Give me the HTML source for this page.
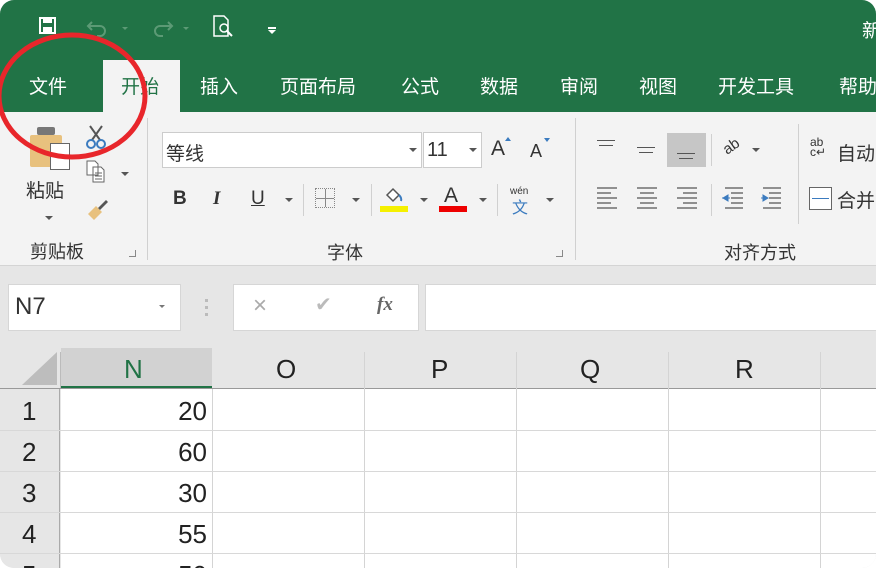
<!DOCTYPE html>
<html><head><meta charset="utf-8">
<style>
*{margin:0;padding:0;box-sizing:border-box}
body{width:876px;height:572px;background:#fff;position:relative;overflow:hidden;font-family:"Liberation Sans","Noto Sans CJK SC",sans-serif;white-space:nowrap}
.a{position:absolute}
#win{position:absolute;left:0;top:0;width:876px;height:568px;border-radius:14px;overflow:hidden;background:#e6e6e6}
.tab{position:absolute;top:72px;color:#fff;font-size:19px}
.t{position:absolute;color:#333;font-size:19px}
.caret{position:absolute;width:0;height:0;border-left:4px solid transparent;border-right:4px solid transparent;border-top:4px solid #555}
.vs{position:absolute;width:1px;background:#d0d0d0}
.ln{position:absolute;height:1px;background:#555}
.cell{position:absolute;background:#fff}
.num{position:absolute;left:100px;width:107px;text-align:right;font-size:26px;color:#222}
</style></head><body>
<div id="win">
<div class="a" style="left:0;top:0;width:876px;height:112px;background:#217346"></div>
<svg class="a" style="left:38px;top:16px" width="20" height="20" viewBox="0 0 20 20"><rect x="2" y="2" width="15" height="15" fill="none" stroke="#fff" stroke-width="2"/><rect x="5" y="2" width="9" height="5" fill="#fff"/><rect x="5" y="11" width="9" height="6" fill="#fff"/></svg>
<svg class="a" style="left:86px;top:14px" width="110" height="24" viewBox="0 0 110 24"><path d="M6 8 L2 12 L6 16 M2 12 H14 a5 5 0 0 1 0 10 H11" fill="none" stroke="#5c9a75" stroke-width="2"/><path d="M36 13 l3 3 l3-3z" fill="#5c9a75"/><path d="M82 8 L86 12 L82 16 M86 12 H74 a5 5 0 0 0 0 10 H77" fill="none" stroke="#5c9a75" stroke-width="2"/><path d="M97 13 l3 3 l3-3z" fill="#5c9a75"/></svg>
<svg class="a" style="left:212px;top:14px" width="26" height="26" viewBox="0 0 26 26"><path d="M2 2 H12 L16 6 V22 H2 Z" fill="none" stroke="#fff" stroke-width="1.5"/><circle cx="12" cy="14" r="4" fill="none" stroke="#fff" stroke-width="1.5"/><path d="M15 17 L20 22" stroke="#fff" stroke-width="2"/></svg>
<div class="a" style="left:268px;top:27px;width:8px;height:2px;background:#fff"></div>
<div class="a" style="left:268px;top:30px;border-left:4px solid transparent;border-right:4px solid transparent;border-top:4px solid #fff"></div>
<div class="a" style="left:862px;top:16px;color:#fff;font-size:19px">新</div>
<div class="a" style="left:103px;top:60px;width:77px;height:53px;background:#f3f3f3"></div>
<div class="tab" style="left:29px">文件</div>
<div class="tab" style="left:121px;color:#217346">开始</div>
<div class="tab" style="left:200px">插入</div>
<div class="tab" style="left:280px">页面布局</div>
<div class="tab" style="left:401px">公式</div>
<div class="tab" style="left:480px">数据</div>
<div class="tab" style="left:560px">审阅</div>
<div class="tab" style="left:639px">视图</div>
<div class="tab" style="left:718px">开发工具</div>
<div class="tab" style="left:839px">帮助</div>
<div class="a" style="left:0;top:112px;width:876px;height:154px;background:#f3f3f3;border-bottom:1px solid #d4d4d4"></div>
<div class="a" style="left:30px;top:135px;width:32px;height:32px;background:#e8c17e;border-radius:2px"></div>
<div class="a" style="left:37px;top:127px;width:18px;height:8px;background:#777;border-radius:2px"></div>
<div class="a" style="left:50px;top:143px;width:20px;height:27px;background:#fff;border:1px solid #666"></div>
<svg class="a" style="left:84px;top:124px" width="24" height="26" viewBox="0 0 24 26"><path d="M6 2 L16 16 M18 2 L8 16" stroke="#555" stroke-width="2"/><circle cx="7" cy="20" r="4" fill="none" stroke="#3b7bbf" stroke-width="2"/><circle cx="17" cy="20" r="4" fill="none" stroke="#3b7bbf" stroke-width="2"/></svg>
<svg class="a" style="left:86px;top:160px" width="22" height="24" viewBox="0 0 22 24"><path d="M1 1 H9 L12 4 V15 H1 Z M7 7 H15 L18 10 V22 H7 Z" fill="#fff" stroke="#666"/><path d="M9 13 H16 M9 16 H16 M9 19 H16" stroke="#666"/></svg>
<div class="caret" style="left:121px;top:172px"></div>
<svg class="a" style="left:86px;top:198px" width="24" height="22" viewBox="0 0 24 22"><path d="M2 16 L10 8 L16 14 L8 22 Z" fill="#e8c17e"/><path d="M12 10 L20 2 L22 4 L14 12 Z" fill="#555"/></svg>
<div class="t" style="left:26px;top:176px">粘贴</div>
<div class="caret" style="left:45px;top:216px"></div>
<div class="t" style="left:30px;top:238px;font-size:18px">剪贴板</div>
<div class="a" style="left:129px;top:250px;width:7px;height:7px;border-right:1px solid #888;border-bottom:1px solid #888"></div>
<div class="vs" style="left:147px;top:118px;height:142px"></div>
<div class="a" style="left:162px;top:132px;width:260px;height:36px;background:#fff;border:1px solid #ccc"></div>
<div class="t" style="left:166px;top:139px;font-size:19px">等线</div>
<div class="caret" style="left:409px;top:148px"></div>
<div class="a" style="left:423px;top:132px;width:59px;height:36px;background:#fff;border:1px solid #ccc"></div>
<div class="t" style="left:427px;top:139px;font-size:20px">11</div>
<div class="caret" style="left:469px;top:148px"></div>
<div class="t" style="left:491px;top:137px;font-size:21px">A</div>
<div class="a" style="left:505px;top:137px;border-left:3px solid transparent;border-right:3px solid transparent;border-bottom:4px solid #3b7bbf"></div>
<div class="t" style="left:530px;top:141px;font-size:18px">A</div>
<div class="a" style="left:544px;top:138px;border-left:3px solid transparent;border-right:3px solid transparent;border-top:4px solid #3b7bbf"></div>
<div class="t" style="left:173px;top:188px;font-size:19px;font-weight:bold">B</div>
<div class="t" style="left:213px;top:188px;font-size:19px;font-style:italic;font-family:'Liberation Serif',serif;font-weight:bold">I</div>
<div class="t" style="left:251px;top:188px;font-size:19px;text-decoration:underline">U</div>
<div class="caret" style="left:285px;top:198px"></div>
<div class="vs" style="left:303px;top:184px;height:32px"></div>
<div class="a" style="left:315px;top:188px;width:20px;height:20px;border:1px dotted #888;background:linear-gradient(#888,#888) 9px 0/1px 100% no-repeat,linear-gradient(#888,#888) 0 9px/100% 1px no-repeat"></div>
<div class="caret" style="left:352px;top:198px"></div>
<div class="vs" style="left:371px;top:184px;height:32px"></div>
<svg class="a" style="left:383px;top:186px" width="22" height="18" viewBox="0 0 22 18"><path d="M4 9 L10 3 L16 9 L10 15 Z" fill="#fff" stroke="#555" stroke-width="1.5"/><path d="M16 9 q3 3 2 6" stroke="#3b7bbf" stroke-width="2" fill="none"/></svg>
<div class="a" style="left:380px;top:206px;width:28px;height:6px;background:#f5f000"></div>
<div class="caret" style="left:420px;top:198px"></div>
<div class="t" style="left:444px;top:184px;font-size:21px">A</div>
<div class="a" style="left:439px;top:206px;width:28px;height:6px;background:#e00"></div>
<div class="caret" style="left:479px;top:198px"></div>
<div class="vs" style="left:497px;top:184px;height:32px"></div>
<div class="a" style="left:510px;top:186px;font-size:10px;color:#333">wén</div>
<div class="a" style="left:512px;top:194px;font-size:16px;color:#3b7bbf">文</div>
<div class="caret" style="left:546px;top:198px"></div>
<div class="t" style="left:327px;top:239px;font-size:18px">字体</div>
<div class="a" style="left:556px;top:250px;width:7px;height:7px;border-right:1px solid #888;border-bottom:1px solid #888"></div>
<div class="vs" style="left:575px;top:118px;height:142px"></div>
<div class="ln" style="left:597px;top:140px;width:18px"></div><div class="ln" style="left:599px;top:145px;width:14px"></div>
<div class="ln" style="left:637px;top:147px;width:18px"></div><div class="ln" style="left:639px;top:152px;width:14px"></div>
<div class="a" style="left:667px;top:133px;width:39px;height:34px;background:#c6c6c6"></div>
<div class="ln" style="left:677px;top:153px;width:18px"></div><div class="ln" style="left:679px;top:158px;width:14px"></div>
<div class="vs" style="left:711px;top:134px;height:32px"></div>
<div class="t" style="left:723px;top:138px;font-size:15px;transform:rotate(-35deg)">ab</div>
<div class="caret" style="left:752px;top:148px"></div>
<div class="vs" style="left:798px;top:124px;height:100px"></div>
<div class="t" style="left:810px;top:137px;font-size:12px;line-height:10px">ab<br>c↵</div>
<div class="t" style="left:837px;top:139px">自动</div>
<svg class="a" style="left:595px;top:186px" width="220" height="24" viewBox="0 0 220 24"><g stroke="#555" stroke-width="1.2"><path d="M2 2H22M2 7H16M2 12H22M2 17H16M2 22H22"/><path d="M42 2H62M45 7H59M42 12H62M45 17H59M42 22H62"/><path d="M82 2H102M88 7H102M82 12H102M88 17H102M82 22H102"/><path d="M130 2H148M136 7H148M136 12H148M136 17H148M130 22H148"/><path d="M168 2H186M174 7H186M174 12H186M174 17H186M168 22H186"/></g><path d="M128 12 l5-3 v6z M127 12 H135" fill="#3b7bbf" stroke="#3b7bbf"/><path d="M173 12 l-5-3 v6z M166 12 H173" fill="#3b7bbf" stroke="#3b7bbf"/></svg>
<div class="vs" style="left:711px;top:184px;height:32px"></div>
<div class="a" style="left:809px;top:187px;width:23px;height:23px;border:1px solid #666;background:#fff"></div>
<div class="a" style="left:812px;top:198px;width:17px;height:1px;background:#3b7bbf"></div>
<div class="t" style="left:837px;top:186px">合并</div>
<div class="t" style="left:724px;top:239px;font-size:18px">对齐方式</div>
<div class="a" style="left:8px;top:284px;width:173px;height:47px;background:#fff;border:1px solid #d6d6d6"></div>
<div class="t" style="left:15px;top:293px;font-size:24px">N7</div>
<div class="caret" style="left:159px;top:305px;border-top-color:#777;border-width:3px 3px 0 3px"></div>
<div class="a" style="left:205px;top:299px;width:3px;height:3px;background:#bbb"></div>
<div class="a" style="left:205px;top:306px;width:3px;height:3px;background:#bbb"></div>
<div class="a" style="left:205px;top:313px;width:3px;height:3px;background:#bbb"></div>
<div class="a" style="left:233px;top:284px;width:186px;height:47px;background:#fff;border:1px solid #d6d6d6"></div>
<div class="a" style="left:253px;top:292px;color:#aaa;font-size:24px">×</div>
<div class="a" style="left:315px;top:292px;color:#bbb;font-size:20px">✔</div>
<div class="a" style="left:377px;top:294px;color:#666;font-size:19px;font-style:italic;font-family:'Liberation Serif',serif;font-weight:bold">fx</div>
<div class="a" style="left:425px;top:284px;width:460px;height:47px;background:#fff;border:1px solid #d6d6d6"></div>
<div class="a" style="left:0;top:348px;width:876px;height:40px;background:#e6e6e6"></div>
<svg class="a" style="left:22px;top:352px" width="36" height="34"><path d="M35 0 V33 H0 Z" fill="#bdbdbd"/></svg>
<div class="a" style="left:61px;top:348px;width:151px;height:40px;background:#d2d2d2;border-bottom:2px solid #217346"></div>
<div class="a" style="left:60px;top:352px;width:1px;height:36px;background:#bbb"></div>
<div class="a" style="left:0;top:388px;width:876px;height:1px;background:#999"></div>
<div class="a" style="left:0;top:389px;width:60px;height:180px;background:#e6e6e6;border-right:1px solid #aaa"></div>
<div class="cell" style="left:61px;top:389px;width:815px;height:180px"></div>
<div class="a" style="left:212px;top:389px;width:1px;height:180px;background:#d4d4d4"></div>
<div class="a" style="left:364px;top:352px;width:1px;height:217px;background:#d4d4d4"></div>
<div class="a" style="left:516px;top:352px;width:1px;height:217px;background:#d4d4d4"></div>
<div class="a" style="left:668px;top:352px;width:1px;height:217px;background:#d4d4d4"></div>
<div class="a" style="left:820px;top:352px;width:1px;height:217px;background:#d4d4d4"></div>
<div class="a" style="left:0;top:430px;width:876px;height:1px;background:#d8d8d8"></div>
<div class="a" style="left:0;top:471px;width:876px;height:1px;background:#d8d8d8"></div>
<div class="a" style="left:0;top:512px;width:876px;height:1px;background:#d8d8d8"></div>
<div class="a" style="left:0;top:553px;width:876px;height:1px;background:#d8d8d8"></div>
<div class="a" style="left:124px;top:354px;font-size:26px;color:#217346">N</div>
<div class="a" style="left:276px;top:354px;font-size:26px;color:#222">O</div>
<div class="a" style="left:431px;top:354px;font-size:26px;color:#222">P</div>
<div class="a" style="left:580px;top:354px;font-size:26px;color:#222">Q</div>
<div class="a" style="left:735px;top:354px;font-size:26px;color:#222">R</div>
<div class="a" style="left:22px;top:396px;font-size:26px;color:#222">1</div>
<div class="a" style="left:22px;top:437px;font-size:26px;color:#222">2</div>
<div class="a" style="left:22px;top:478px;font-size:26px;color:#222">3</div>
<div class="a" style="left:22px;top:519px;font-size:26px;color:#222">4</div>
<div class="a" style="left:22px;top:560px;font-size:26px;color:#222">5</div>
<div class="num" style="top:396px">20</div>
<div class="num" style="top:437px">60</div>
<div class="num" style="top:478px">30</div>
<div class="num" style="top:519px">55</div>
<div class="num" style="top:560px">50</div>
</div>
<svg class="a" style="left:0;top:0" width="876" height="572"><ellipse cx="72" cy="96" rx="73" ry="61" fill="none" stroke="#e8262b" stroke-width="5"/></svg>
</body></html>
